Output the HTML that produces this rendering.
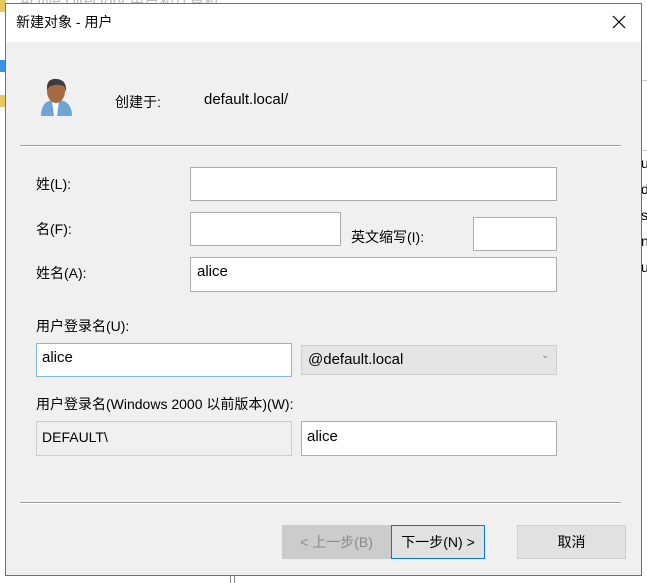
<!DOCTYPE html>
<html><head><meta charset="utf-8"><style>
body{margin:0;width:647px;height:583px;background:#fff;position:relative;overflow:hidden;font-family:"Liberation Sans","Noto Sans CJK SC",sans-serif;font-size:14px;color:#000}
.a{position:absolute}
.dlg{left:5px;top:3px;width:635px;height:571px;border:1px solid #707070;background:#f0f0f0}
.tb{left:6px;top:4px;width:635px;height:38px;background:#fff}
.in{position:absolute;background:#fff;border:1px solid #adadad;box-sizing:border-box;padding:5px 6px;font-size:15px}
.lbl{position:absolute;font-size:14px}
.sep{position:absolute;height:1px;background:#a0a0a0;border-bottom:1px solid #fff}
.btn{position:absolute;box-sizing:border-box;text-align:center;line-height:32px;font-size:14px;background:#e1e1e1;border:1px solid #adadad}
</style></head><body>
<div class="a" style="left:20px;top:-10px;color:#bbb;font-size:15px">Active Directory 用户和计算机</div>
<div class="a" style="left:0;top:0;width:6px;height:12px;background:#e8c860"></div>
<div class="a" style="left:0;top:60px;width:6px;height:12px;background:#3a8ee6"></div>
<div class="a" style="left:0;top:95px;width:6px;height:12px;background:#e8c860"></div>
<div class="a" style="left:641px;top:150px;width:6px;height:1px;background:#ccc"></div>
<div class="a" style="left:641px;top:80px;width:6px;height:1px;background:#ccc"></div>
<div class="a" style="left:641px;top:150px;font-size:14px;line-height:26px">u<br>d<br>s<br>n<br>u</div>
<div class="a" style="left:230px;top:574px;width:3px;height:9px;border-left:1px solid #888;border-right:1px solid #888"></div>
<div class="a dlg"></div>
<div class="a tb"></div>
<div class="lbl" style="left:16px;top:12px;font-size:14px">新建对象 - 用户</div>
<svg class="a" style="left:612px;top:15px" width="14" height="14"><path d="M1 1L13 13M13 1L1 13" stroke="#000" stroke-width="1.2"/></svg>
<svg class="a" style="left:38px;top:76px" width="36" height="42">
<path d="M3 40 Q3 26 14 24 L22 24 Q34 26 34 40Z" fill="#6fa4d6"/>
<path d="M14 25 L16 40 L19 40 L21 25Z" fill="#fff"/>
<ellipse cx="18" cy="15" rx="9" ry="12" fill="#a56a3e"/>
<path d="M9 14 Q8 2 19 3 Q29 4 28 16 L26 10 Q18 7 11 11Z" fill="#3d3d3d"/>
</svg>
<div class="lbl" style="left:115px;top:92px">创建于:</div>
<div class="lbl" style="left:204px;top:91px;font-size:15px">default.local/</div>
<div class="sep" style="left:20px;top:145px;width:601px"></div>
<div class="lbl" style="left:36px;top:174px">姓(L):</div>
<div class="in" style="left:190px;top:167px;width:367px;height:34px"></div>
<div class="lbl" style="left:36px;top:219px">名(F):</div>
<div class="in" style="left:190px;top:212px;width:151px;height:34px"></div>
<div class="lbl" style="left:351px;top:227px">英文缩写(I):</div>
<div class="in" style="left:473px;top:217px;width:84px;height:34px"></div>
<div class="lbl" style="left:36px;top:263px">姓名(A):</div>
<div class="in" style="left:190px;top:257px;width:367px;height:35px">alice</div>
<div class="lbl" style="left:36px;top:316px">用户登录名(U):</div>
<div class="in" style="left:36px;top:343px;width:256px;height:34px;border-color:#7eb4ea;padding-left:5px">alice</div>
<div class="in" style="left:301px;top:345px;width:256px;height:30px;background:#e5e5e5;border-color:#cfcfcf;padding-top:5px">@default.local</div>
<div class="lbl" style="left:541px;top:350px;font-size:10px;color:#888">⌄</div>
<div class="lbl" style="left:36px;top:394px">用户登录名(Windows 2000 以前版本)(W):</div>
<div class="in" style="left:36px;top:421px;width:256px;height:35px;background:#f0f0f0;border-color:#cccccc;padding-top:7px;padding-left:5px;font-size:14px">DEFAULT\</div>
<div class="in" style="left:301px;top:421px;width:256px;height:35px;padding-top:6px;padding-left:5px">alice</div>
<div class="sep" style="left:20px;top:502px;width:601px"></div>
<div class="btn" style="left:282px;top:525px;width:109px;height:34px;background:#cccccc;border-color:#cccccc;color:#8a8a8a">&lt; 上一步(B)</div>
<div class="btn" style="left:391px;top:525px;width:94px;height:34px;border:1px solid #0078d7">下一步(N) &gt;</div>
<div class="btn" style="left:517px;top:525px;width:109px;height:34px;border-color:#cfcfcf">取消</div>
</body></html>
